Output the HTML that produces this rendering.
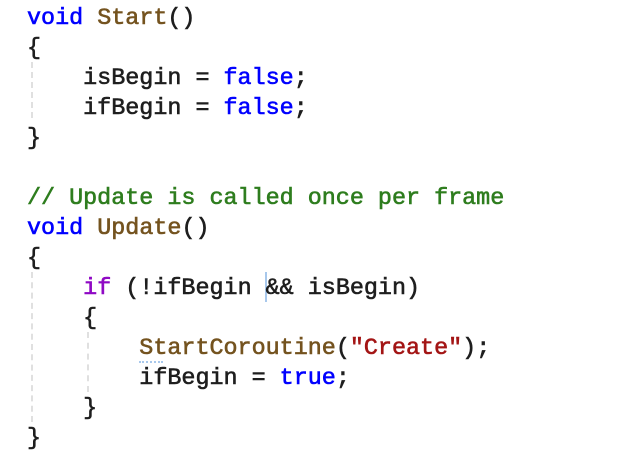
<!DOCTYPE html>
<html><head><style>
body{margin:0;background:#fff;width:624px;height:462px;overflow:hidden;position:relative}
pre{margin:0;position:absolute;left:27px;top:4px;font-family:"Liberation Mono",monospace;font-size:23.4px;line-height:30px;color:#1e1e1e;-webkit-text-stroke:0.6px}
.k{color:#0000ff}.f{color:#74531f}.c{color:#2e7d1e}.p{color:#8f08c4}.s{color:#a31515}
.g{position:absolute;width:0;border-left:2px dashed #e0e0e0}
</style></head><body>
<div class="g" style="left:31px;top:62px;height:56px"></div>
<div class="g" style="left:31px;top:272px;height:150px"></div>
<div class="g" style="left:87px;top:332px;height:60px"></div>
<div style="position:absolute;left:265px;top:272px;width:2px;height:30px;background:#a8c8ec"></div>
<div style="position:absolute;left:139px;top:361px;width:24px;border-top:2px dotted #a8c8ec"></div>
<pre><span class="k">void</span> <span class="f">Start</span>()
{
    isBegin = <span class="k">false</span>;
    ifBegin = <span class="k">false</span>;
}

<span class="c">// Update is called once per frame</span>
<span class="k">void</span> <span class="f">Update</span>()
{
    <span class="p">if</span> (!ifBegin &amp;&amp; isBegin)
    {
        <span class="f">StartCoroutine</span>(<span class="s">"Create"</span>);
        ifBegin = <span class="k">true</span>;
    }
}</pre>
</body></html>
